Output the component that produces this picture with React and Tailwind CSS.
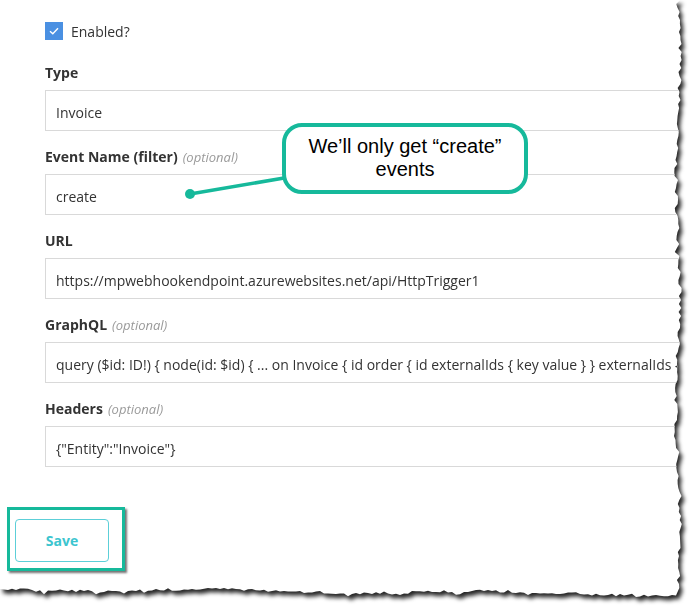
import React from "react";

// jagged "torn paper" outline for the screenshot edge
function tornEdge() {
  let seed = 7;
  const rnd = () => {
    seed = (seed * 16807) % 2147483647;
    return seed / 2147483647;
  };
  const pts = ["0px 0px", "680px 0px"];
  // right edge, top to bottom
  for (let y = 4; y < 592; y += 4) {
    const base = 678 + Math.sin(y / 37) * 2;
    const x = base + (rnd() - 0.5) * 4 - (rnd() > 0.93 ? 3 : 0);
    pts.push(`${x.toFixed(1)}px ${y}px`);
  }
  // bottom edge, right to left
  for (let x = 676; x > 0; x -= 4) {
    const base = 589 + (x / 676) * 5 + Math.sin(x / 45) * 1.5;
    const y = base + (rnd() - 0.5) * 3 + (rnd() > 0.9 ? 2.5 : 0);
    pts.push(`${x}px ${y.toFixed(1)}px`);
  }
  pts.push("0px 589px");
  return `polygon(${pts.join(", ")})`;
}

const CLIP = tornEdge();

const FIELDS = [
  { key: "type", label: "Type", value: "Invoice" },
  { key: "event", label: "Event Name (filter)", optional: true, value: "create" },
  {
    key: "url",
    label: "URL",
    value: "https://mpwebhookendpoint.azurewebsites.net/api/HttpTrigger1",
  },
  {
    key: "graphql",
    label: "GraphQL",
    optional: true,
    value:
      "query ($id: ID!) { node(id: $id) { ... on Invoice { id order { id externalIds { key value } } externalIds { key value } } } }",
  },
  { key: "headers", label: "Headers", optional: true, value: '{"Entity":"Invoice"}' },
];

function Field({ label, optional, value }) {
  return (
    <div className="flex flex-col">
      <div className="h-[20px] leading-[20px] text-[14px] font-bold text-[#333]">
        {label}
        {optional && (
          <span className="ml-[5px] text-[13px] font-normal italic text-[#9a9a9a]">
            (optional)
          </span>
        )}
      </div>
      <div className="mt-[7px] h-[41px] w-[660px] border border-[#d9d9d9] px-[10px] pt-[3px] flex items-center text-[14px] text-[#333] whitespace-nowrap overflow-hidden">
        {value}
      </div>
    </div>
  );
}

export default function App() {
  return (
    <div
      className="relative h-[609px] w-[693px] overflow-hidden bg-white"
      style={{ fontFamily: '"Open Sans", "Liberation Sans", sans-serif' }}
    >
      <div className="drop-shadow-[3px_4px_2px_rgba(0,0,0,0.85)]">
        <div className="relative h-[600px] w-[686px] bg-white" style={{ clipPath: CLIP }}>
          <div className="pt-[22px]">
            {/* Enabled checkbox */}
            <div className="pl-[45px] flex items-center gap-[8px] h-[18px]">
              <span className="w-[18px] h-[18px] bg-[#4a90e2] flex items-center justify-center">
                <svg width="10" height="8" viewBox="0 0 10 8" fill="none">
                  <path d="M1 4.2 L3.8 6.8 L9 1.2" stroke="white" strokeWidth="1.4" />
                </svg>
              </span>
              <span className="text-[14px] text-[#333]">Enabled?</span>
            </div>

            {/* Fields */}
            <div className="pl-[45px] mt-[23px] flex flex-col gap-[16px]">
              {FIELDS.map((f) => (
                <Field key={f.key} {...f} />
              ))}
            </div>

            {/* Save, highlighted */}
            <div className="pl-[7px] mt-[40px]">
              <div className="inline-block border-[3px] border-[#16b99b] bg-white pl-[5px] pt-[9px] pr-[13px] pb-[6px] shadow-[2px_2px_2px_rgba(0,0,0,0.55)]">
                <button className="w-[94px] h-[43px] rounded-[4px] border border-[#5ccfd8] text-[14px] font-bold text-[#3cc5cf] bg-white">
                  Save
                </button>
              </div>
            </div>
          </div>

          {/* Callout connector */}
          <svg
            className="absolute left-0 top-0 pointer-events-none"
            width="686"
            height="600"
          >
            <line x1="190" y1="194" x2="290" y2="177" stroke="#16b99b" strokeWidth="3.5" />
            <circle cx="190" cy="194" r="5" fill="#16b99b" />
          </svg>

          {/* Callout bubble */}
          <div
            className="absolute left-[282px] top-[123px] w-[246px] h-[71px] rounded-[20px] border-[4px] border-[#16b99b] bg-white flex items-center justify-center text-center text-[20px] leading-[23px] text-black pb-[1px]"
            style={{ fontFamily: '"Liberation Sans", Arial, sans-serif' }}
          >
            We’ll only get “create”
            <br />
            events
          </div>
        </div>
      </div>
    </div>
  );
}
